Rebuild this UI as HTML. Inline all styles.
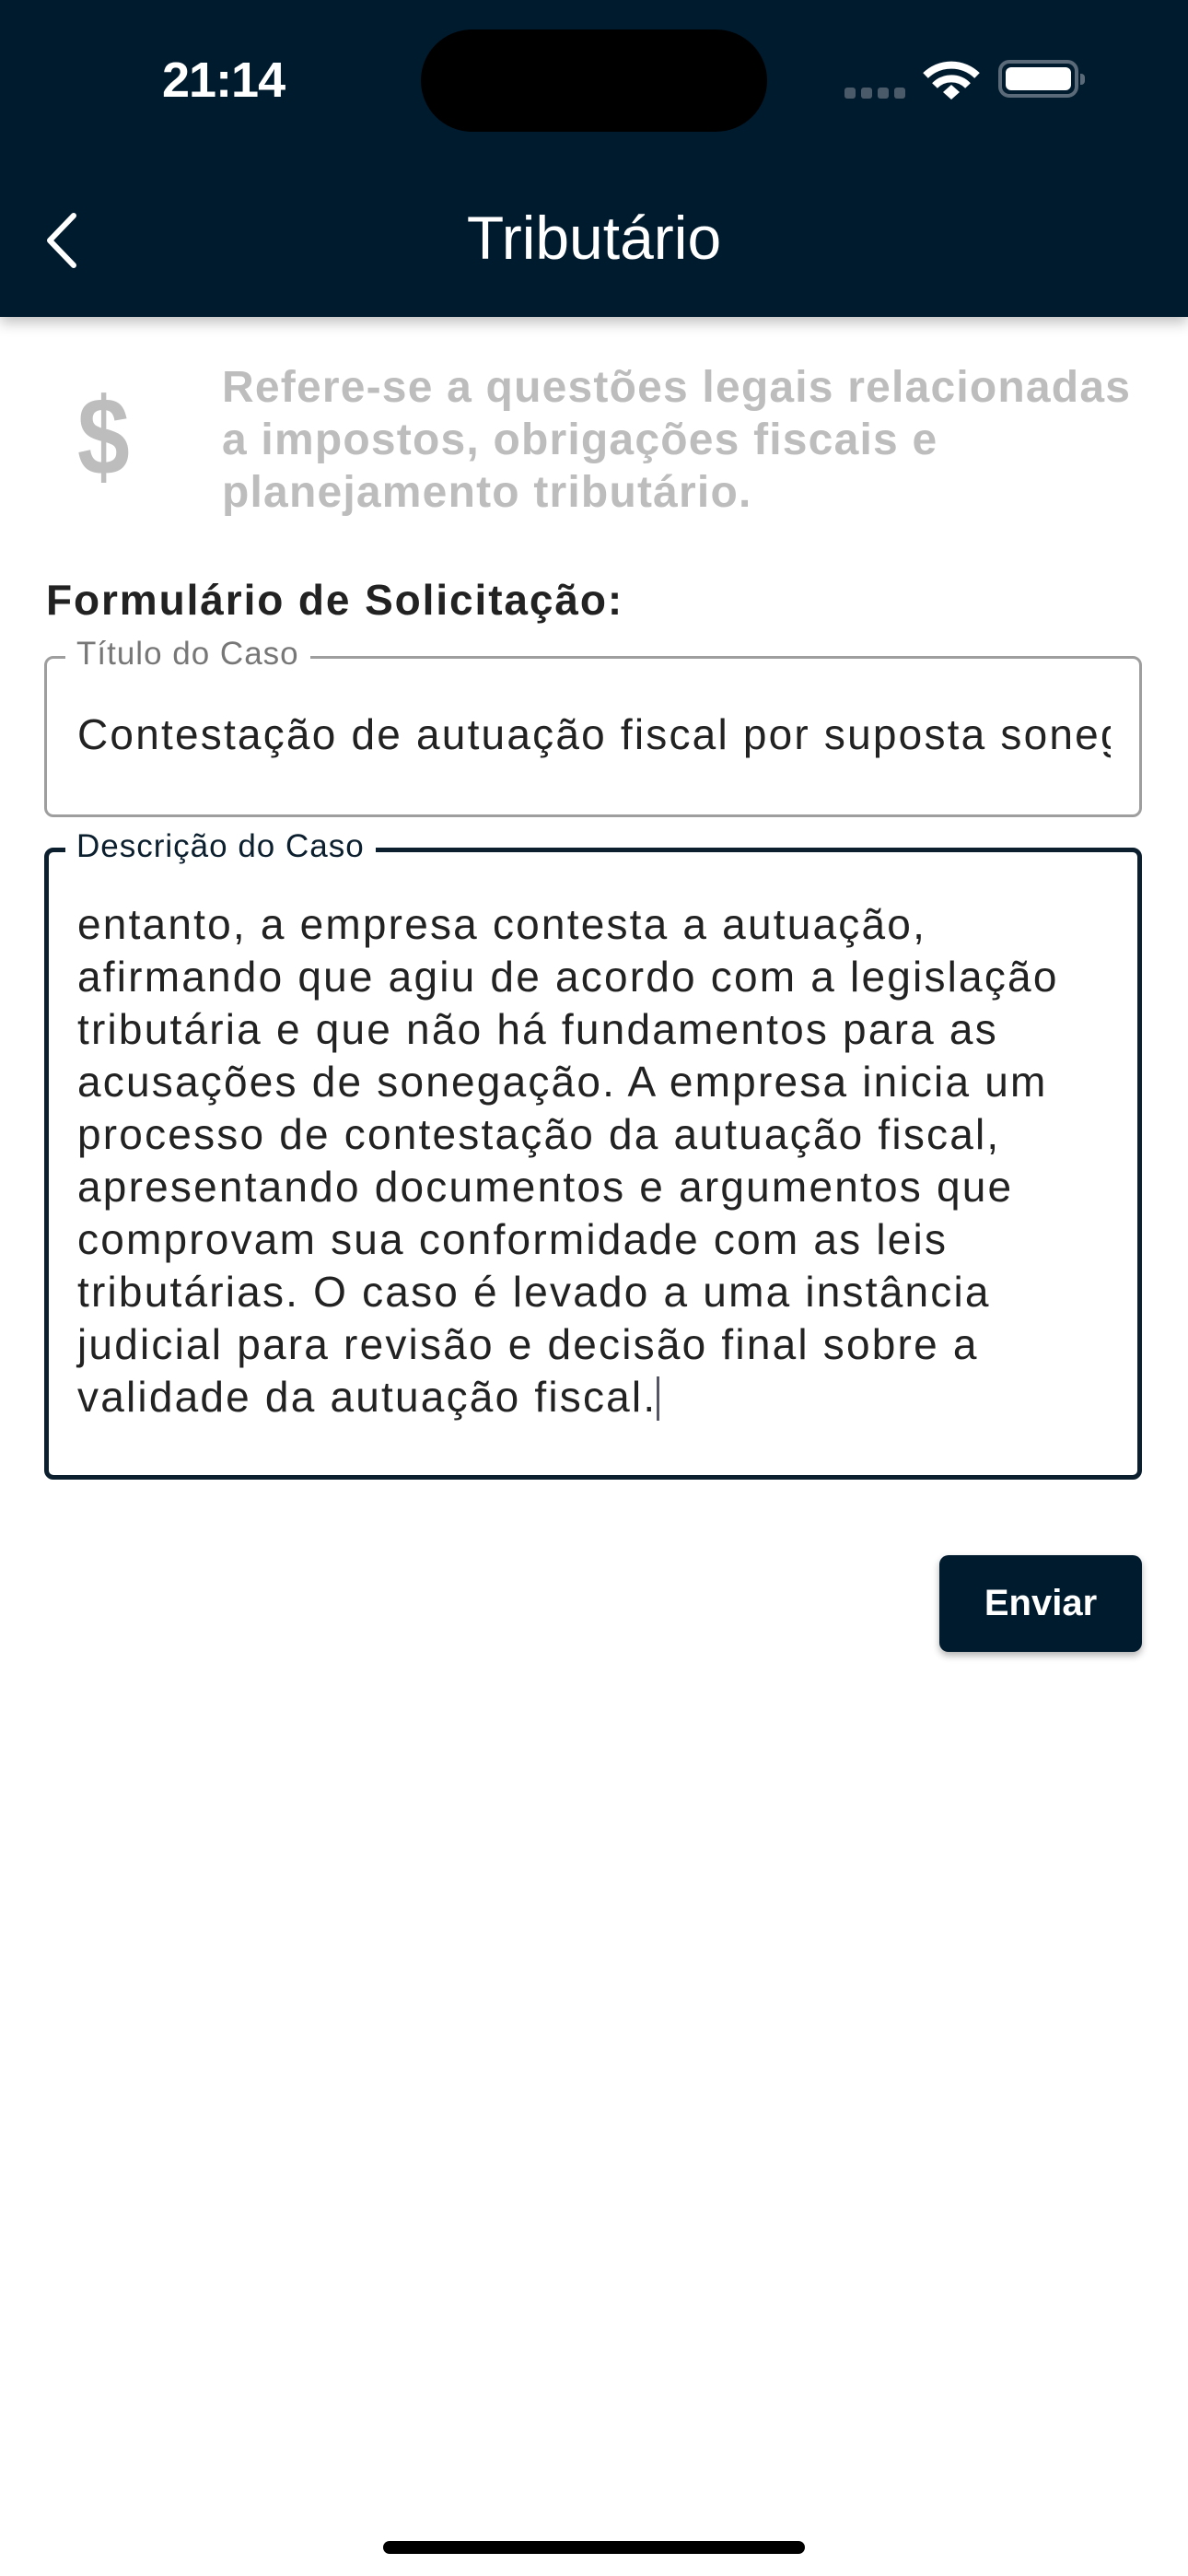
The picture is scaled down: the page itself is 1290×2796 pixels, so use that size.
<!DOCTYPE html>
<html><head><meta charset="utf-8"><style>
*{margin:0;padding:0;box-sizing:border-box}
body{width:1290px;height:2796px;background:#fff;position:relative;overflow:hidden;font-family:"Liberation Sans",sans-serif}
.hdr{position:absolute;left:0;top:0;width:1290px;height:344px;background:#001b2e;box-shadow:0 6px 14px rgba(0,0,0,0.25)}
.abs{position:absolute}
.time{left:176px;top:56px;font-size:54px;font-weight:bold;color:#fff;letter-spacing:-1px}
.island{left:457px;top:32px;width:376px;height:111px;background:#000;border-radius:56px}
.dot{position:absolute;top:95px;width:12px;height:12px;border-radius:3px;background:#4a5a68}
.title{left:0;width:1290px;top:220px;text-align:center;color:#fff;font-size:66px}
.desc{left:241px;top:392px;font-size:48px;letter-spacing:1.2px;font-weight:bold;color:#bdbdbd;line-height:57px;white-space:nowrap}
.form{left:50px;top:624px;font-size:46px;letter-spacing:1.9px;font-weight:bold;color:#222}
.box1{left:48px;top:712px;width:1192px;height:175px;border:3px solid #9e9e9e;border-radius:10px}
.lbl{position:absolute;background:#fff;padding:0 12px;font-size:35px;letter-spacing:1px;white-space:nowrap}
.box2{left:48px;top:920px;width:1192px;height:686px;border:5px solid #0b1f2e;border-radius:10px}
.txt{font-size:46px;letter-spacing:2.2px;color:#222;white-space:nowrap;line-height:57px}
.btn{left:1020px;top:1688px;width:220px;height:105px;background:#001b2e;border-radius:10px;color:#fff;font-size:40px;font-weight:bold;text-align:center;line-height:105px;box-shadow:0 4px 8px rgba(0,0,0,0.3)}
.home{left:416px;top:2758px;width:458px;height:14px;background:#000;border-radius:7px}
</style></head><body>
<div class="hdr"></div>
<div class="abs time">21:14</div>
<div class="abs island"></div>
<div class="dot" style="left:917px"></div><div class="dot" style="left:935px"></div><div class="dot" style="left:953px"></div><div class="dot" style="left:971px"></div>
<svg class="abs" style="left:1002px;top:64px" width="62" height="46" viewBox="0 0 62 46">
<path d="M3 18 A40 40 0 0 1 59 18" fill="none" stroke="#fff" stroke-width="8"/>
<path d="M13 29 A25 25 0 0 1 49 29" fill="none" stroke="#fff" stroke-width="8"/>
<path d="M22 36 L31 28 L40 36 L31 44 Z" fill="#fff"/>
</svg>
<div class="abs" style="left:1084px;top:65px;width:87px;height:41px;border:4px solid #5a6a78;border-radius:12px"></div>
<div class="abs" style="left:1092px;top:73px;width:71px;height:25px;background:#fff;border-radius:6px"></div>
<div class="abs" style="left:1173px;top:80px;width:5px;height:12px;background:#5a6a78;border-radius:0 4px 4px 0"></div>
<svg class="abs" style="left:44px;top:230px" width="44" height="62" viewBox="0 0 44 62"><path d="M36 4 L10 31 L36 58" fill="none" stroke="#fff" stroke-width="6" stroke-linecap="round" stroke-linejoin="round"/></svg>
<div class="abs title">Tributário</div>
<div class="abs" style="left:84px;top:405px;font-size:120px;font-weight:bold;color:#bdbdbd;transform:scaleX(0.85);transform-origin:left">$</div>
<div class="abs desc">Refere-se a questões legais relacionadas<br>a impostos, obrigações fiscais e<br>planejamento tributário.</div>
<div class="abs form">Formulário de Solicitação:</div>
<div class="abs box1">
<div class="lbl" style="left:20px;top:-25px;color:#777">Título do Caso</div>
<div class="txt" style="position:absolute;left:33px;top:54px;width:1122px;overflow:hidden">Contestação de autuação fiscal por suposta sonegação</div>
</div>
<div class="abs box2">
<div class="lbl" style="left:18px;top:-26px;color:#0b1f2e">Descrição do Caso</div>
<div class="txt" style="position:absolute;left:31px;top:50px">entanto, a empresa contesta a autuação,<br>afirmando que agiu de acordo com a legislação<br>tributária e que não há fundamentos para as<br>acusações de sonegação. A empresa inicia um<br>processo de contestação da autuação fiscal,<br>apresentando documentos e argumentos que<br>comprovam sua conformidade com as leis<br>tributárias. O caso é levado a uma instância<br>judicial para revisão e decisão final sobre a<br>validade da autuação fiscal.<span style="display:inline-block;width:3px;height:48px;background:#556;vertical-align:-10px"></span></div>
</div>
<div class="abs btn">Enviar</div>
<div class="abs home"></div>
</body></html>
